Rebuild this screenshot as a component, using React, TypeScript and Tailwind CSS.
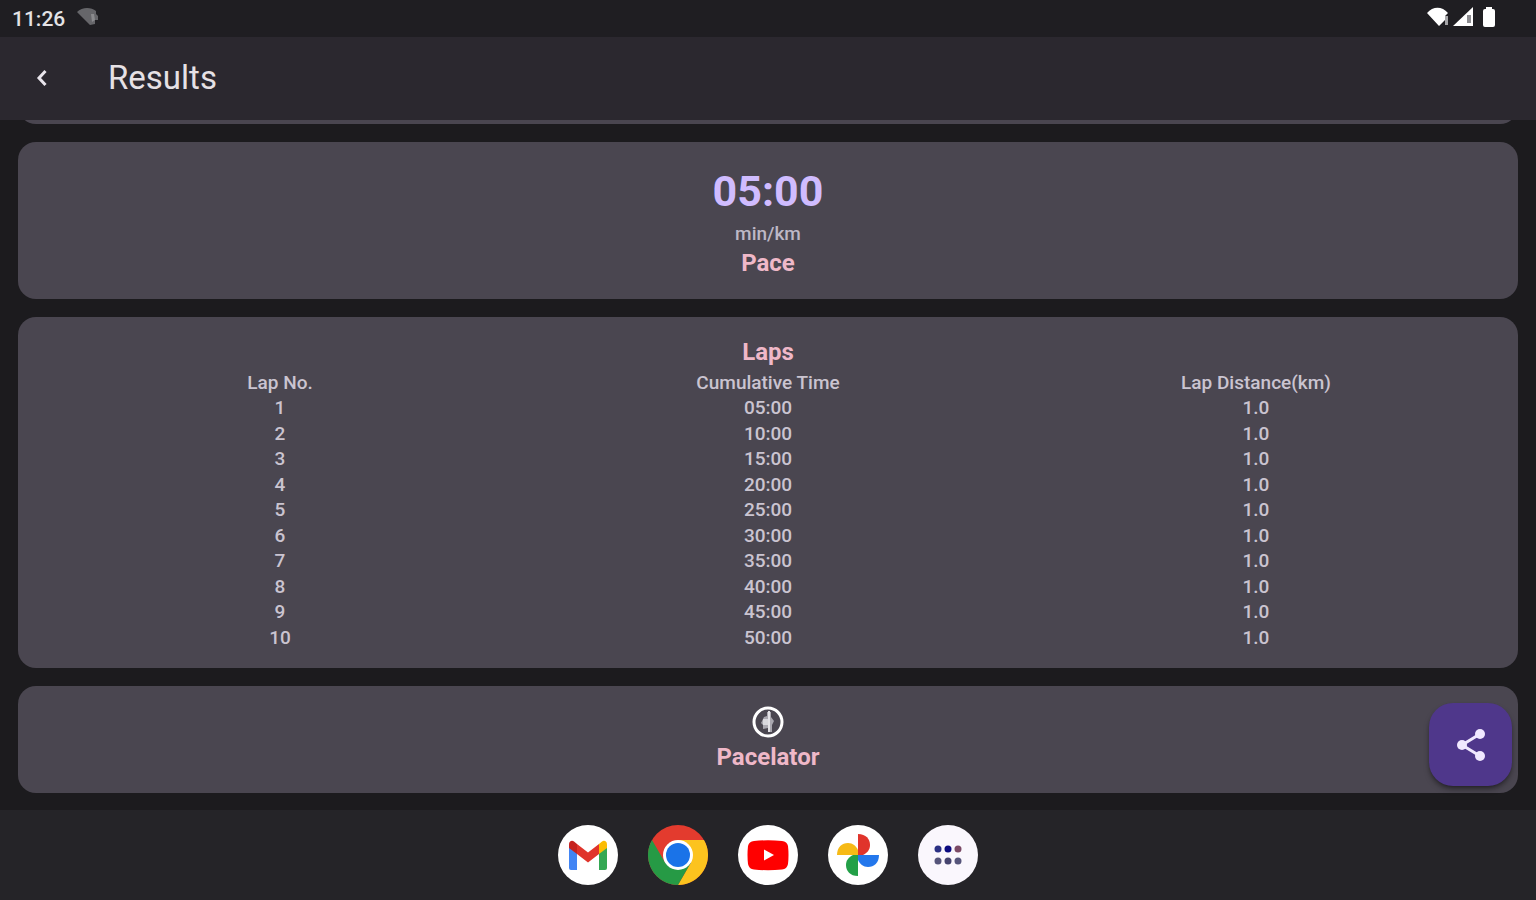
interface Lap {
  no: number;
  time: string;
  distance: string;
}

const LAPS: Lap[] = [
  { no: 1, time: "05:00", distance: "1.0" },
  { no: 2, time: "10:00", distance: "1.0" },
  { no: 3, time: "15:00", distance: "1.0" },
  { no: 4, time: "20:00", distance: "1.0" },
  { no: 5, time: "25:00", distance: "1.0" },
  { no: 6, time: "30:00", distance: "1.0" },
  { no: 7, time: "35:00", distance: "1.0" },
  { no: 8, time: "40:00", distance: "1.0" },
  { no: 9, time: "45:00", distance: "1.0" },
  { no: 10, time: "50:00", distance: "1.0" },
];

function StatusBar() {
  return (
    <div className="flex h-[37px] shrink-0 items-center justify-between bg-[#1f1e22] pb-1 pl-3 pr-10">
      <div className="flex items-center gap-3">
        <span className="pt-1 text-[21px] leading-6 font-medium text-[#e4e3e6]">11:26</span>
        <svg width="22" height="18" viewBox="0 0 22 18" aria-hidden="true">
          <path d="M0 4C5-1 14-1 19 3V6L21 8V12H18V16L13 17Z" fill="#66666a" />
          <path d="M14 6H17L18 12L15 14Z" fill="#8b8b8e" />
        </svg>
      </div>
      <div className="flex items-center gap-1">
        <svg width="22" height="20" viewBox="0 0 22 20" aria-hidden="true">
          <path d="M0 6C6-1 15-1 21 6L18 9V13L12 19Z" fill="#fff" />
          <path d="M18 9H21V18H18V12Z" fill="#a5a5a8" />
        </svg>
        <svg width="21" height="20" viewBox="0 0 21 20" aria-hidden="true">
          <path d="M0 19L20 0V19Z" fill="#fff" />
          <path d="M14 8H18V16H14Z" fill="#8c8c90" />
        </svg>
        <svg className="ml-1" width="14" height="20" viewBox="0 0 14 20" aria-hidden="true">
          <path
            d="M4 0H10V2H11Q13 2 13 4V18Q13 20 11 20H3Q1 20 1 18V4Q1 2 3 2H4Z"
            fill="#fff"
          />
        </svg>
      </div>
    </div>
  );
}

function AppBar() {
  return (
    <header className="flex h-[83px] shrink-0 items-center bg-[#2b282f] pb-0.5 pl-6">
      <button aria-label="Back" className="flex size-9 items-center justify-center">
        <svg width="12" height="18" viewBox="0 0 12 18" fill="none" aria-hidden="true">
          <path d="M9.500 2L3 9L9.500 16" stroke="#e9e5ec" strokeWidth="3" />
        </svg>
      </button>
      <h1 className="ml-12 text-[33px] leading-10 text-[#e6e1e5]">Results</h1>
    </header>
  );
}

function PacelatorLogo() {
  return (
    <svg width="34" height="34" viewBox="0 0 34 34" fill="none" aria-hidden="true">
      <circle cx="17" cy="17" r="14" stroke="#fff" strokeWidth="3" />
      <path
        d="M16 7H20V12L23 16L21 20V27H17V23L12 24V20L10 18L13 12L16 11Z"
        fill="#a9a7af"
      />
      <path d="M17 6H19V27H17Z" fill="#e3e2e6" />
      <path d="M12 14H17V20H12Z" fill="#d9d8dd" />
    </svg>
  );
}

function GmailIcon() {
  return (
    <svg className="size-full" viewBox="0 0 60 60" aria-hidden="true">
      <circle cx="30" cy="30" r="30" fill="#fff" />
      <path d="M11 22L19 27.500V45H13Q11 45 11 43Z" fill="#4285f4" />
      <path d="M49 22L41 27.500V45H47Q49 45 49 43Z" fill="#34a853" />
      <path d="M41 19L44 16.500C46 15 49 16 49 19.500V23L41 29Z" fill="#fbbc04" />
      <path d="M19 19L16 16.500C14 15 11 16 11 19.500V23L19 29Z" fill="#c5221f" />
      <path d="M19 19L30 27.500L41 19V29L30 37.500L19 29Z" fill="#e0342b" />
    </svg>
  );
}

function ChromeIcon() {
  return (
    <svg className="size-full" viewBox="0 0 60 60" aria-hidden="true">
      <circle cx="30" cy="30" r="30" fill="#e33b2e" />
      <path d="M30 15H56A30 30 0 0 1 30 60L43 37.500Z" fill="#fcc31e" />
      <path d="M17 37.500L4 15A30 30 0 0 0 30 60L43 37.500Z" fill="#269a45" />
      <circle cx="30" cy="30" r="15" fill="#fff" />
      <circle cx="30" cy="30" r="12" fill="#1a73e8" />
    </svg>
  );
}

function YouTubeIcon() {
  return (
    <svg className="size-full" viewBox="0 0 60 60" aria-hidden="true">
      <circle cx="30" cy="30" r="30" fill="#fff" />
      <path
        d="M16 16Q30 14.500 44 16Q49 16.500 50 21Q51 30 50 39Q49 44 44 44.500Q30 46 16 44.500Q11 44 10 39Q9 30 10 21Q11 16.500 16 16Z"
        fill="#f00"
      />
      <path d="M26 24.500L36 30L26 35.500Z" fill="#fff" />
    </svg>
  );
}

function PhotosIcon() {
  return (
    <svg className="size-full" viewBox="0 0 60 60" aria-hidden="true">
      <circle cx="30" cy="30" r="30" fill="#fff" />
      <path d="M30 9C38 9 42 14 42 20C42 25 39 28 35 30H30Z" fill="#e0342b" />
      <path d="M9 30C9 22 14 18 20 18C25 18 28 21 30 25V30Z" fill="#f6ba16" />
      <path d="M30 51C22 51 18 46 18 40C18 35 21 32 25 30H30Z" fill="#23a048" />
      <path d="M51 30C51 38 46 42 40 42C35 42 32 39 30 35V30Z" fill="#2377ec" />
    </svg>
  );
}

function AppsIcon() {
  return (
    <svg className="size-full" viewBox="0 0 60 60" aria-hidden="true">
      <circle cx="30" cy="30" r="30" fill="#faf7fd" />
      <circle cx="20" cy="24" r="3.500" fill="#2b3184" />
      <circle cx="30" cy="24" r="3.500" fill="#0b0b80" />
      <circle cx="40" cy="24" r="3.500" fill="#7b4a66" />
      <circle cx="20" cy="36" r="3.500" fill="#55547a" />
      <circle cx="30" cy="36" r="3.500" fill="#45436e" />
      <circle cx="40" cy="36" r="3.500" fill="#55547a" />
    </svg>
  );
}

const DOCK = [
  { label: "Gmail", Icon: GmailIcon },
  { label: "Chrome", Icon: ChromeIcon },
  { label: "YouTube", Icon: YouTubeIcon },
  { label: "Photos", Icon: PhotosIcon },
  { label: "All apps", Icon: AppsIcon },
];

function Dock() {
  return (
    <nav className="flex shrink-0 items-center justify-center gap-[30px] bg-[#252428] py-[15px]">
      {DOCK.map(({ label, Icon }) => (
        <button key={label} aria-label={label} className="size-[60px] rounded-full">
          <Icon />
        </button>
      ))}
    </nav>
  );
}

export default function App() {
  return (
    <div className="flex min-h-screen flex-col bg-[#1c1b1e] font-[Roboto,sans-serif]">
      <StatusBar />
      <AppBar />

      <main className="relative flex flex-1 flex-col gap-[18px] px-[18px] pb-[17px]">
        {/* bottom edge of the card scrolled under the app bar */}
        <div className="flex h-1 items-end overflow-hidden">
          <div className="h-10 w-full shrink-0 rounded-[18px] bg-[#4a4650]" />
        </div>

        <section className="rounded-[18px] bg-[#4a4650] p-[18px] text-center">
          <p className="text-[43px] leading-[62px] font-bold text-[#d0bcff]">05:00</p>
          <p className="text-[19px] leading-6 font-medium text-[#bdb8c6]">min/km</p>
          <h2 className="text-2xl leading-[35px] font-bold text-[#efb8c8]">Pace</h2>
        </section>

        <section className="rounded-[18px] bg-[#4a4650] p-[18px] text-center">
          <h2 className="text-2xl leading-[35px] font-bold text-[#efb8c8]">Laps</h2>
          <table className="w-full table-fixed text-[19px] leading-6 text-[#cac4d0]">
            <thead>
              <tr className="h-[25px]">
                <th className="p-0 font-medium">Lap No.</th>
                <th className="p-0 font-medium">Cumulative Time</th>
                <th className="p-0 font-medium">Lap Distance(km)</th>
              </tr>
            </thead>
            <tbody className="font-medium">
              {LAPS.map((lap) => (
                <tr key={lap.no} className="odd:h-[26px] even:h-[25px]">
                  <td className="p-0">{lap.no}</td>
                  <td className="p-0">{lap.time}</td>
                  <td className="p-0">{lap.distance}</td>
                </tr>
              ))}
            </tbody>
          </table>
        </section>

        <section className="flex flex-col items-center rounded-[18px] bg-[#4a4650] p-[18px]">
          <div className="flex h-9 items-center">
            <PacelatorLogo />
          </div>
          <h2 className="text-2xl leading-[35px] font-bold text-[#efb8c8]">Pacelator</h2>
        </section>

        <button
          aria-label="Share"
          className="absolute right-6 bottom-6 flex size-[83px] items-center justify-center rounded-3xl bg-[#4f378b] shadow-md shadow-black/40"
        >
          <svg width="32" height="34" viewBox="0 0 32 34" aria-hidden="true">
            <path d="M25 6L7 17L25 28" fill="none" stroke="#f1e8ff" strokeWidth="3" />
            <circle cx="25" cy="6" r="5" fill="#f1e8ff" />
            <circle cx="7" cy="17" r="5" fill="#f1e8ff" />
            <circle cx="25" cy="28" r="5" fill="#f1e8ff" />
          </svg>
        </button>
      </main>

      <Dock />
    </div>
  );
}
